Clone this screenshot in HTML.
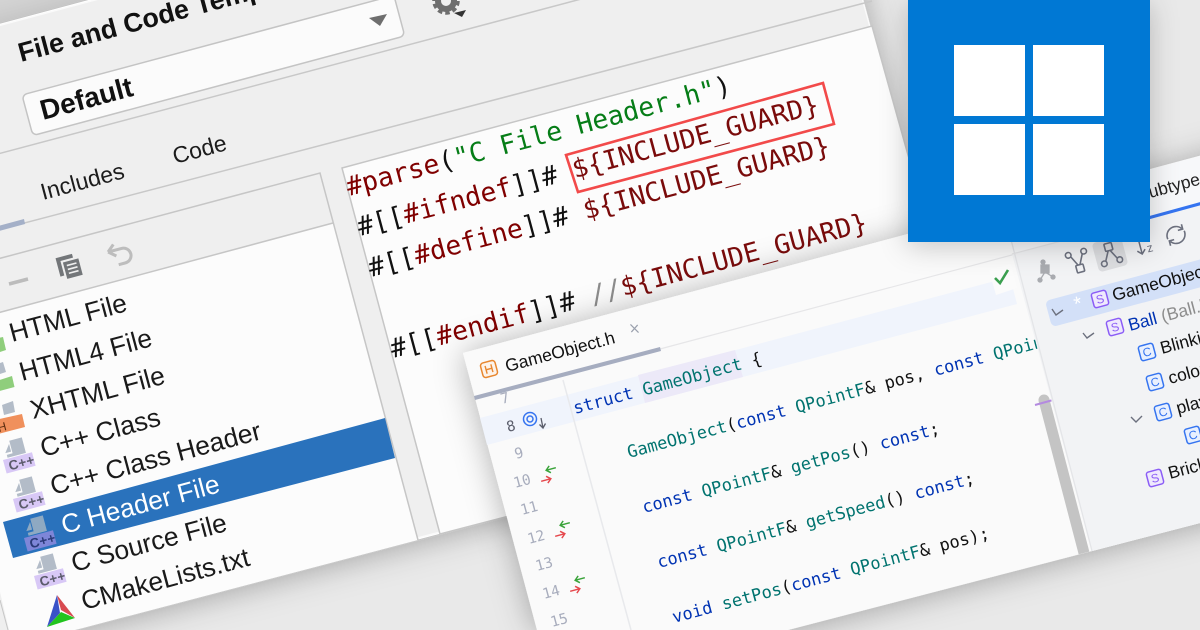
<!DOCTYPE html>
<html><head><meta charset="utf-8"><title>File and Code Templates</title>
<style>
html,body{margin:0;padding:0;width:1200px;height:630px;overflow:hidden;background:#e9e9e9}
svg{display:block}
.s{font-family:"Liberation Sans",sans-serif}
.m{font-family:"DejaVu Sans Mono",monospace}
.r{fill:#800000}.d{fill:#7a0b0b}.k{fill:#111}.g{fill:#067d17}
.b{fill:#0033b3}.t{fill:#00736f}
.n{font-family:"DejaVu Sans Mono",monospace;font-size:14.5px;fill:#a8adbd}
.l{font-family:"Liberation Sans",sans-serif;font-size:26.4px;fill:#1a1a1a}
.c{font-family:"Liberation Sans",sans-serif;font-size:13.5px;font-weight:bold;fill:#5b5b6b;letter-spacing:.3px}
.tr{font-family:"Liberation Sans",sans-serif;font-size:17.5px;fill:#111}
.ic{font-family:"Liberation Sans",sans-serif;font-size:12px;text-anchor:middle}
</style></head><body>
<svg width="1200" height="630" viewBox="0 0 1200 630" xmlns="http://www.w3.org/2000/svg">
<defs>
<filter id="sh" x="-20%" y="-20%" width="140%" height="140%"><feDropShadow dx="0" dy="2" stdDeviation="16" flood-color="#000" flood-opacity=".3"/></filter>
<filter id="sh2" x="-20%" y="-20%" width="140%" height="140%"><feDropShadow dx="0" dy="4" stdDeviation="14" flood-color="#000" flood-opacity=".22"/></filter>
</defs>
<rect width="1200" height="630" fill="#e9e9e9"/>

<!-- LEFT WINDOW -->
<polygon points="-100,50 810,-194 971,395 75,630 -100,630" fill="#fff" stroke="#c4c4c4" stroke-width="1" filter="url(#sh)"/>
<polygon points="0,0 85,0 0,23" fill="#c4c4c4" opacity=".55"/>
<polygon points="-100,52 811,-191 969,393 75,628 -100,628" fill="#efefef" stroke="#fafafa" stroke-width="1.5"/>

<text class="s" font-size="26.8" font-weight="bold" fill="#111" transform="translate(21 62) rotate(-15)">File and Code Templates</text>

<g transform="translate(22 95) rotate(-15)">
<rect x="0" y="0" width="385" height="42" rx="5" fill="#fbfbfb" stroke="#c4c4c4" stroke-width="1.5"/>
</g>
<text class="s" font-size="28" font-weight="bold" fill="#111" transform="translate(43 120) rotate(-15)">Default</text>
<polygon points="369,18 387,14 380,26" fill="#6e6e6e"/>

<!-- gear -->
<g fill="none" stroke="#6e6e6e">
<circle cx="446" cy="1" r="8" stroke-width="6"/>
<circle cx="446" cy="1" r="12" stroke-width="3.5" stroke-dasharray="4.5 3"/>
</g>
<polygon points="454,13 466,10 462,17" fill="#333"/>

<line x1="-10" y1="156" x2="600" y2="-6" stroke="#c8c8c8" stroke-width="1.5"/>
<line x1="-10" y1="232" x2="872" y2="1" stroke="#c8c8c8" stroke-width="1.5"/>
<polygon points="-2,226 24,219 25,224 -1,231" fill="#a4b0c8"/>

<text class="s" font-size="23" fill="#1c1c1c" transform="translate(43 200) rotate(-15)">Includes</text>
<text class="s" font-size="23" fill="#1c1c1c" transform="translate(175 164) rotate(-15)">Code</text>

<!-- list -->
<polygon points="-10,315 333,223 418,540 83,628 75,630 -10,630" fill="#fcfcfc"/>
<polyline points="-10,261 320,173 418,540" fill="none" stroke="#c6c6c6" stroke-width="1.5"/>
<line x1="-10" y1="315" x2="333" y2="223" stroke="#c6c6c6" stroke-width="1.5"/>
<polygon points="0,592 9,630 0,630" fill="#efefef"/>
<line x1="0" y1="600" x2="8" y2="630" stroke="#c6c6c6" stroke-width="1"/>

<!-- toolbar -->
<line x1="9" y1="284" x2="28" y2="279" stroke="#bcbcbc" stroke-width="3.5"/>
<g transform="translate(69 266) rotate(-15)">
<path d="M-11 8 V-11 H6 V-7 H-7 V8 Z" fill="#737679"/>
<rect x="-5" y="-5" width="16" height="17" fill="#737679"/>
<path d="M-2 -1 H8 M-2 3 H8 M-2 7 H8" stroke="#efefef" stroke-width="1.6"/>
</g>
<g transform="translate(120 254) rotate(-15)" fill="none" stroke="#bdbdbd" stroke-width="3">
<path d="M-11 -5 L-4 -11 M-11 -5 L-4 1 M-10 -5 H3 a7.5 7.5 0 0 1 0 15 H-4"/>
</g>

<!-- list rows -->
<polygon points="3,522 385,418 395,458 13,558" fill="#2a72bc"/>
<text class="l" transform="translate(12 342) rotate(-15)">HTML File</text>
<text class="l" transform="translate(22 381) rotate(-15)">HTML4 File</text>
<text class="l" transform="translate(33 419) rotate(-15)">XHTML File</text>
<text class="l" transform="translate(43 457) rotate(-15)">C++ Class</text>
<text class="l" transform="translate(53 495) rotate(-15)">C++ Class Header</text>
<text class="l" style="fill:#fff" transform="translate(64 534) rotate(-15)">C Header File</text>
<text class="l" transform="translate(74 572) rotate(-15)">C Source File</text>
<text class="l" transform="translate(84 610) rotate(-15)">CMakeLists.txt</text>

<!-- html icons -->
<polygon points="-6,339 3,337 6,350 -3,353" fill="#8fce7c"/>
<polygon points="-10,383 12,376 14.5,387 -8,393" fill="#8fce7c"/>
<polygon points="-3,364 3,362 6,372 -3,375" fill="#b3bcc8"/>
<polygon points="-5,420 22,414 25,427 -2,434" fill="#f0905c"/>
<text class="ic" fill="#5a2c10" transform="translate(3 431) rotate(-15)">H</text>
<polygon points="2,405 13,401 15,412 4,415" fill="#b3bcc8"/>

<g transform="translate(3 460) rotate(-15)">
<rect width="30" height="14" fill="#d8c8f6"/>
<path d="M11 -17 H24 V-1 H5 V-4 H11 Z M4 -6 L10 -14 V-6 Z" fill="#b3bcc8"/>
<text class="c" x="4" y="12">C++</text>
</g>
<g transform="translate(13 499) rotate(-15)">
<rect width="30" height="14" fill="#d8c8f6"/>
<path d="M11 -17 H24 V-1 H5 V-4 H11 Z M4 -6 L10 -14 V-6 Z" fill="#b3bcc8"/>
<text class="c" x="4" y="12">C++</text>
</g>
<g transform="translate(24 538) rotate(-15)">
<rect width="30" height="14" fill="#7e86d8"/>
<path d="M11 -17 H24 V-1 H5 V-4 H11 Z M4 -6 L10 -14 V-6 Z" fill="#8ea9c2"/>
<text class="c" style="fill:#2b3a78" x="4" y="12">C++</text>
</g>
<g transform="translate(34 576) rotate(-15)">
<rect width="30" height="14" fill="#d8c8f6"/>
<path d="M11 -17 H24 V-1 H5 V-4 H11 Z M4 -6 L10 -14 V-6 Z" fill="#b3bcc8"/>
<text class="c" x="4" y="12">C++</text>
</g>
<!-- cmake -->
<polygon points="47,627 57,595 60,613" fill="#3a52c8"/>
<polygon points="57,595 75,618 61,610" fill="#d84a50"/>
<polygon points="47,627 75,618 61,612" fill="#22c41e"/>

<!-- editor panel -->
<polygon points="342,168 872,26 975,395 440,534" fill="#fcfcfc" stroke="#c6c6c6" stroke-width="1.5"/>

<g class="m" font-size="26.4" xml:space="preserve" style="white-space:pre">
<text transform="translate(349 196) rotate(-15)"><tspan class="r">#parse</tspan><tspan class="k">(</tspan><tspan class="g">"C File Header.h"</tspan><tspan class="k">)</tspan></text>
<text transform="translate(360 236) rotate(-15)"><tspan class="k">#[[</tspan><tspan class="r">#ifndef</tspan><tspan class="k">]]# </tspan><tspan class="d">${INCLUDE_GUARD}</tspan></text>
<text transform="translate(371 277) rotate(-15)"><tspan class="k">#[[</tspan><tspan class="r">#define</tspan><tspan class="k">]]# </tspan><tspan class="d">${INCLUDE_GUARD}</tspan></text>
<text transform="translate(393 358) rotate(-15)"><tspan class="k">#[[</tspan><tspan class="r">#endif</tspan><tspan class="k">]]# </tspan><tspan fill="#8c8c8c">//</tspan><tspan class="d">${INCLUDE_GUARD}</tspan></text>
</g>
<polygon points="566,155 823,83 834,124 578,192" fill="none" stroke="#f24a4a" stroke-width="2.6"/>

<!-- SECOND WINDOW -->
<polygon points="463,353 1300,129 1300,497 788,630 537,630" fill="#fafafa" filter="url(#sh)"/>

<!-- current line band -->
<polygon points="480,418 1010,277 1017,304 487,445" fill="#f0f4fc"/>
<polygon points="638,375 735,350 743,377 645,403" fill="#ece9f8"/>
<polygon points="989,270 1011,264 1017,288 996,295" fill="#fbfbfb"/>
<path d="M995 278 L1000 283 L1008 270" fill="none" stroke="#3a9f4f" stroke-width="2.6"/>

<!-- gutter divider -->
<line x1="563" y1="380" x2="631" y2="630" stroke="#e8e9ec" stroke-width="1.5"/>
<!-- tab divider -->
<line x1="660" y1="349" x2="1300" y2="178" stroke="#e6e6e8" stroke-width="1.2"/>

<!-- line numbers -->
<text class="n" transform="translate(502 404) rotate(-15)">7</text>
<text class="n" style="fill:#5a5d6b" transform="translate(508 432) rotate(-15)">8</text>
<text class="n" transform="translate(516 459) rotate(-15)">9</text>
<text class="n" transform="translate(515 488) rotate(-15)">10</text>
<text class="n" transform="translate(522 515) rotate(-15)">11</text>
<text class="n" transform="translate(529 544) rotate(-15)">12</text>
<text class="n" transform="translate(537 571) rotate(-15)">13</text>
<text class="n" transform="translate(544 599) rotate(-15)">14</text>
<text class="n" transform="translate(552 627) rotate(-15)">15</text>

<!-- tab -->
<polygon points="474,396 660,347 661,351 475,400" fill="#a6adc0"/>
<g transform="translate(489 369) rotate(-15)">
<rect x="-7.5" y="-7.5" width="15" height="15" rx="3" fill="#fdf3ea" stroke="#e8872f" stroke-width="1.5"/>
<path d="M-3 -4 V4 M3 -4 V4 M-3 0 H3" stroke="#e8872f" stroke-width="1.4" fill="none"/>
</g>
<text class="s" font-size="17.5" fill="#111" transform="translate(507 372) rotate(-15)">GameObject.h</text>
<path d="M630 330 L639 327 M633 323 L636 334" stroke="#9aa0ad" stroke-width="1.2" fill="none" transform="rotate(-30 634.5 328.5)"/>

<!-- gutter icons -->
<g fill="none" stroke="#3574f0" stroke-width="1.5">
<circle cx="530" cy="419" r="6.5"/><circle cx="530" cy="419" r="3"/>
</g>
<path d="M541 418 L543 428 M539.5 424.5 L543 428 L545.5 423.5" fill="none" stroke="#5a5d6b" stroke-width="1.3"/>

<g fill="none" stroke-width="1.5">
<g transform="translate(551 469) rotate(-15)" stroke="#3aa33a"><path d="M5 0 H-5 M-1 -3.5 L-5 0 L-1 3.5"/></g>
<g transform="translate(546 480) rotate(-15)" stroke="#e5484d"><path d="M-5 0 H5 M1 -3.5 L5 0 L1 3.5"/></g>
<g transform="translate(565 524) rotate(-15)" stroke="#3aa33a"><path d="M5 0 H-5 M-1 -3.5 L-5 0 L-1 3.5"/></g>
<g transform="translate(560 535) rotate(-15)" stroke="#e5484d"><path d="M-5 0 H5 M1 -3.5 L5 0 L1 3.5"/></g>
<g transform="translate(580 579) rotate(-15)" stroke="#3aa33a"><path d="M5 0 H-5 M-1 -3.5 L-5 0 L-1 3.5"/></g>
<g transform="translate(575 590) rotate(-15)" stroke="#e5484d"><path d="M-5 0 H5 M1 -3.5 L5 0 L1 3.5"/></g>
</g>

<!-- code -->
<g class="m" font-size="17" style="white-space:pre" xml:space="preserve">
<text transform="translate(575 414) rotate(-15)"><tspan class="b">struct</tspan> <tspan class="t">GameObject</tspan> <tspan class="k">{</tspan></text>
<text transform="translate(629 458) rotate(-15)"><tspan class="t">GameObject</tspan><tspan class="k">(</tspan><tspan class="b">const</tspan> <tspan class="t">QPointF</tspan><tspan class="k">&amp;</tspan> <tspan class="k">pos,</tspan> <tspan class="b">const</tspan> <tspan class="t">QPointF</tspan></text>
<text transform="translate(644 513) rotate(-15)"><tspan class="b">const</tspan> <tspan class="t">QPointF</tspan><tspan class="k">&amp;</tspan> <tspan class="t">getPos</tspan><tspan class="k">()</tspan> <tspan class="b">const</tspan><tspan class="k">;</tspan></text>
<text transform="translate(659 568) rotate(-15)"><tspan class="b">const</tspan> <tspan class="t">QPointF</tspan><tspan class="k">&amp;</tspan> <tspan class="t">getSpeed</tspan><tspan class="k">()</tspan> <tspan class="b">const</tspan><tspan class="k">;</tspan></text>
<text transform="translate(674 623) rotate(-15)"><tspan class="b">void</tspan> <tspan class="t">setPos</tspan><tspan class="k">(</tspan><tspan class="b">const</tspan> <tspan class="t">QPointF</tspan><tspan class="k">&amp; pos);</tspan></text>
</g>

<!-- scrollbar -->
<line x1="1044" y1="400" x2="1084" y2="553" stroke="#c4c4c4" stroke-width="11"/>
<circle cx="1044" cy="400" r="5.5" fill="#c4c4c4"/>
<line x1="1035" y1="405" x2="1053" y2="400" stroke="#b48ae0" stroke-width="2"/>

<!-- right panel -->
<polygon points="1003,209 1300,129 1300,497 1092,551" fill="#f7f8fa"/>
<polygon points="1012,254 1300,178 1300,497 1092,551" fill="#f2f3f5"/>
<line x1="1003" y1="209" x2="1092" y2="551" stroke="#e4e5e8" stroke-width="1.3"/>
<line x1="1012" y1="254" x2="1300" y2="178" stroke="#e6e6e8" stroke-width="1.2"/>
<text class="s" font-size="17.5" fill="#222" transform="translate(1139 201) rotate(-15)">Subtypes</text>
<line x1="1148" y1="218" x2="1210" y2="201" stroke="#3574f0" stroke-width="3.2"/>

<!-- panel toolbar -->
<g fill="#a9abb0" stroke="#a9abb0" stroke-width="1.3">
<circle cx="1043" cy="262" r="2"/><rect x="1041" y="265" width="8" height="8"/>
<circle cx="1040" cy="280" r="2"/><circle cx="1053" cy="277" r="2"/>
<path d="M1044 262 L1045 270 M1045 272 L1040 280 M1045 272 L1053 277" fill="none"/>
</g>
<g transform="translate(1078 261) rotate(-15)" fill="none" stroke="#6c707e" stroke-width="1.6">
<circle cx="-8" cy="-8" r="2.8"/><circle cx="8" cy="-8" r="2.8"/><rect x="-3.5" y="4" width="7.5" height="7.5" rx="1"/>
<path d="M-6 -6 L-1 4 M6 -6 L1 4"/>
</g>
<g transform="translate(1110 254) rotate(-15)">
<rect x="-15" y="-15" width="30" height="30" rx="4" fill="#dcdde0"/>
<g fill="none" stroke="#6c707e" stroke-width="1.6">
<rect x="-3.5" y="-11" width="7.5" height="7.5" rx="1"/><circle cx="-8" cy="8" r="2.8"/><circle cx="8" cy="8" r="2.8"/>
<path d="M-1 -3.5 L-6 6 M1 -3.5 L6 6"/>
</g>
</g>
<g transform="translate(1145 245) rotate(-15)">
<path d="M-5 -9 V8 M-9 4 L-5 8 L-1 4" fill="none" stroke="#6c707e" stroke-width="1.5"/>
<text class="s" font-size="12" fill="#6c707e" x="1" y="8">z</text>
</g>
<g transform="translate(1176 235) rotate(-15)" fill="none" stroke="#6c707e" stroke-width="1.6">
<path d="M-9 2 A9 9 0 0 1 7 -5 M8 -9 V-4 H3"/>
<path d="M9 -2 A9 9 0 0 1 -7 5 M-8 9 V4 H-3"/>
</g>

<!-- selected tree row -->
<g transform="translate(1045 301) rotate(-15)">
<rect x="0" y="0" width="200" height="27" rx="5" fill="#d3e0f8"/>
</g>
<path d="M1052 309 L1056 315 L1063 310" fill="none" stroke="#6c707e" stroke-width="1.4"/>
<path d="M1083 333 L1087 338 L1094 333" fill="none" stroke="#6c707e" stroke-width="1.4"/>
<path d="M1131 417 L1136 422 L1142 416" fill="none" stroke="#6c707e" stroke-width="1.4"/>
<text class="s" font-size="20" fill="#fff" transform="translate(1076 311) rotate(-15)">*</text>

<!-- tree icons -->
<g transform="translate(1100 299) rotate(-15)"><rect x="-7.5" y="-7.5" width="15" height="15" rx="2.5" fill="#efe9fd" stroke="#8b5cf6" stroke-width="1.5"/><text class="ic" y="4.2" fill="#8b5cf6">S</text></g>
<g transform="translate(1115 327) rotate(-15)"><rect x="-7.5" y="-7.5" width="15" height="15" rx="2.5" fill="#efe9fd" stroke="#8b5cf6" stroke-width="1.5"/><text class="ic" y="4.2" fill="#8b5cf6">S</text></g>
<g transform="translate(1147 352) rotate(-15)"><rect x="-7.5" y="-7.5" width="15" height="15" rx="2.5" fill="#e9f0fe" stroke="#3574f0" stroke-width="1.5"/><text class="ic" y="4.2" fill="#3574f0">C</text></g>
<g transform="translate(1155 382) rotate(-15)"><rect x="-7.5" y="-7.5" width="15" height="15" rx="2.5" fill="#e9f0fe" stroke="#3574f0" stroke-width="1.5"/><text class="ic" y="4.2" fill="#3574f0">C</text></g>
<g transform="translate(1163 412) rotate(-15)"><rect x="-7.5" y="-7.5" width="15" height="15" rx="2.5" fill="#e9f0fe" stroke="#3574f0" stroke-width="1.5"/><text class="ic" y="4.2" fill="#3574f0">C</text></g>
<g transform="translate(1193 435) rotate(-15)"><rect x="-7.5" y="-7.5" width="15" height="15" rx="2.5" fill="#e9f0fe" stroke="#3574f0" stroke-width="1.5"/><text class="ic" y="4.2" fill="#3574f0">C</text></g>
<g transform="translate(1155 478) rotate(-15)"><rect x="-7.5" y="-7.5" width="15" height="15" rx="2.5" fill="#efe9fd" stroke="#8b5cf6" stroke-width="1.5"/><text class="ic" y="4.2" fill="#8b5cf6">S</text></g>

<text class="tr" transform="translate(1114 301) rotate(-15)">GameObject</text>
<text class="tr" transform="translate(1130 331) rotate(-15)"><tspan fill="#0033b3">Ball</tspan><tspan fill="#8c8c8c"> (Ball.h)</tspan></text>
<text class="tr" transform="translate(1162 354) rotate(-15)">BlinkingBall</text>
<text class="tr" transform="translate(1170 384) rotate(-15)">color</text>
<text class="tr" transform="translate(1178 414) rotate(-15)">player</text>
<text class="tr" transform="translate(1170 479) rotate(-15)">Brick</text>

<!-- WINDOWS TILE -->
<rect x="908" y="0" width="242" height="242" fill="#0178d4" filter="url(#sh2)"/>
<rect x="954" y="45" width="71" height="71" fill="#fff"/>
<rect x="1033" y="45" width="71" height="71" fill="#fff"/>
<rect x="954" y="124" width="71" height="71" fill="#fff"/>
<rect x="1033" y="124" width="71" height="71" fill="#fff"/>
</svg>
</body></html>
